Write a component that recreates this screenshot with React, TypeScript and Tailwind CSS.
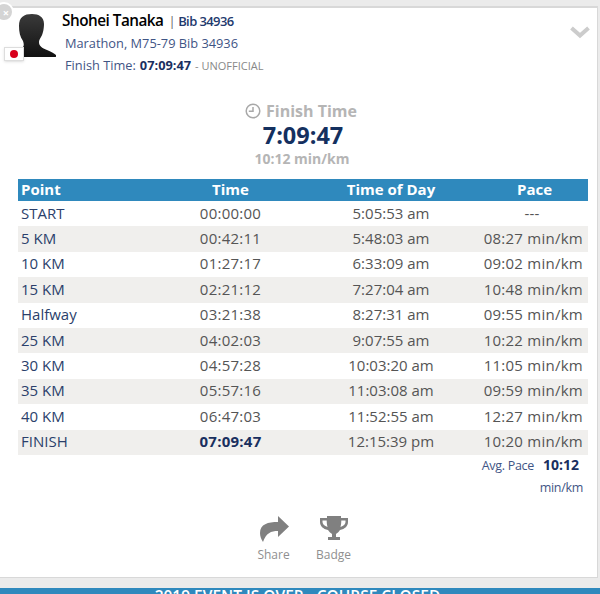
const rows = [
  ["START", "00:00:00", "5:05:53 am", "---"],
  ["5 KM", "00:42:11", "5:48:03 am", "08:27 min/km"],
  ["10 KM", "01:27:17", "6:33:09 am", "09:02 min/km"],
  ["15 KM", "02:21:12", "7:27:04 am", "10:48 min/km"],
  ["Halfway", "03:21:38", "8:27:31 am", "09:55 min/km"],
  ["25 KM", "04:02:03", "9:07:55 am", "10:22 min/km"],
  ["30 KM", "04:57:28", "10:03:20 am", "11:05 min/km"],
  ["35 KM", "05:57:16", "11:03:08 am", "09:59 min/km"],
  ["40 KM", "06:47:03", "11:52:55 am", "12:27 min/km"],
  ["FINISH", "07:09:47", "12:15:39 pm", "10:20 min/km"],
];

export default function App() {
  return (
    <div className="relative h-[594px] w-[600px] overflow-hidden bg-[#ebebeb] pt-[6px] font-['Open_Sans',sans-serif] text-[#555]">
      <div className="absolute left-[-6px] top-[2px] flex h-[20px] w-[20px] items-center justify-center rounded-full border-2 border-white bg-[#d4d4d4] pl-[4px] text-[11px] font-bold leading-none text-white">×</div>
      <div className="mr-[2px] h-[572px] border-t-2 border-r border-b border-[#d8d8d8] bg-white">
        <div className="flex h-[88px]">
          <div className="relative ml-[4px] mt-[2px] h-[50px] w-[52px] shrink-0">
            <svg viewBox="0 0 52 50" className="absolute left-0 top-0 h-[50px] w-[52px]">
              <defs>
                <linearGradient id="p" x1="0" y1="0" x2="0" y2="1">
                  <stop offset="0" stopColor="#3a3a3a" />
                  <stop offset="1" stopColor="#111" />
                </linearGradient>
              </defs>
              <path fill="url(#p)" d="M28 4c-8 0-13 3-13 12 0 6 1 11 4 15 1 3 1 5 0 6-2 3-6 6-9 8l-1 1 2 1h40c1 0 2-1 1-2-2-2-5-3-9-5-5-2-8-4-8-8 0-2 1-3 2-5 2-3 3-9 3-13 0-7-5-10-12-10z" />
            </svg>
            <div className="absolute bottom-[-1px] left-0 flex h-[14px] w-[20px] items-center justify-center border border-[#ddd] bg-white shadow-sm">
              <div className="h-[8px] w-[8px] rounded-full bg-[#d8001c]" />
            </div>
          </div>
          <div className="ml-[6px] pt-[2px]">
            <div className="flex items-baseline text-[15.3px] leading-[20px] tracking-[-0.5px]">
              <span className="font-semibold text-black">Shohei Tanaka</span>
              <span className="ml-[5px] text-[13px] text-[#666]">|</span>
              <span className="ml-[3px] text-[13px] font-semibold tracking-[-0.6px] text-[#1f3a6e]">Bib 34936</span>
            </div>
            <div className="ml-[3px] mt-[2px] text-[12.8px] leading-[20px] text-[#3f5585]">Marathon, M75-79 Bib 34936</div>
            <div className="ml-[3px] mt-[2px] flex items-baseline text-[12.8px] leading-[20px] text-[#3f5585]">
              <span>Finish Time:</span>
              <span className="ml-[4px] font-bold text-[#1a2f5f]">07:09:47</span>
              <span className="ml-[4px] text-[11px] text-[#888]">- UNOFFICIAL</span>
            </div>
          </div>
        </div>
        <div className="flex items-center justify-center gap-[5px] pl-[5px] pt-[4px] text-[16px] font-bold leading-[22px] text-[#b5b5b5]">
          <svg viewBox="0 0 16 16" className="h-[16px] w-[16px]" fill="none" stroke="#a8a8a8" strokeWidth="1.5">
            <circle cx="8" cy="8" r="6.8" />
            <path d="M8 4v4.300H3.800" />
          </svg>
          <span>Finish Time</span>
        </div>
        <div className="pl-[9px] text-center text-[23.5px] font-bold leading-[27px] text-[#14305f]">7:09:47</div>
        <div className="pl-[7px] text-center text-[14px] font-bold leading-[20px] text-[#b5b5b5]">10:12 min/km</div>
        <div className="ml-[18px] mr-[9px] mt-[10px]">
          <div className="grid h-[22px] grid-cols-[133px_160px_160px_117px] items-center bg-[#2f89bd] pb-[1px] text-[15px] font-bold leading-none text-white">
            <div className="pl-[3px]">Point</div>
            <div className="pr-[1px] text-center">Time</div>
            <div className="text-center">Time of Day</div>
            <div className="pl-[10px] text-center">Pace</div>
          </div>
          {rows.map((r, i) => (
            <div key={r[0]} className={`grid h-[25.4px] grid-cols-[133px_160px_160px_117px] items-center pb-[1px] text-[15px] leading-none ${i % 2 === 1 ? "bg-[#f0efed]" : "bg-white"}`}>
              <div className="pl-[3px] text-[#2b3f6b]">{r[0]}</div>
              <div className={`pr-[1px] text-center tracking-[0.25px] ${i === 9 ? "font-bold text-[#1a2f5f]" : "text-[#555]"}`}>{r[1]}</div>
              <div className="text-center text-[#555]">{r[2]}</div>
              <div className={`whitespace-nowrap pr-[5px] tracking-[0.25px] text-[#555] ${i === 0 ? "pl-[10px] text-center" : "text-right"}`}>{r[3]}</div>
            </div>
          ))}
          <div className="flex items-baseline justify-end pr-[9px] leading-[20px] text-[#3f5585]">
            <span className="text-[12.5px] tracking-[-0.3px]">Avg. Pace</span>
            <span className="ml-[9px] text-[14px] font-bold text-[#1a2f5f]">10:12</span>
          </div>
          <div className="pr-[5px] pt-[2px] text-right text-[12.5px] leading-[20px] tracking-[-0.3px] text-[#3f5585]">min/km</div>
        </div>
        <div className="mt-[18px] flex justify-center gap-[24px] pl-[10px] text-[12px] leading-[16px] text-[#8f8f8f]">
          <div className="flex w-[36px] flex-col items-center">
            <svg viewBox="0 0 30 26" className="h-[26px] w-[30px]" fill="#808080">
              <path d="M19 0l11 10.500L19 21v-6c-7 0-12 2-15 11-2-3-3-6-3-9C1 8 9 6 19 6z" />
            </svg>
            <span className="mt-[5px]">Share</span>
          </div>
          <div className="flex w-[36px] flex-col items-center">
            <svg viewBox="0 0 28 26" className="h-[26px] w-[28px]" fill="#808080">
              <path d="M7 0h14v2h7v4c0 4-3 7-8 8-1 2-3 3-4 4v3h4v3H8v-3h4v-3c-1-1-3-2-4-4C3 13 0 10 0 6V2h7zM2.500 4.500V6c0 2 2 4 5 5-.5-2-.8-4-.8-6.500zm23 0h-4.200c0 2.500-.3 4.500-.8 6.500 3-1 5-3 5-5z" fillRule="evenodd" />
            </svg>
            <span className="mt-[5px]">Badge</span>
          </div>
        </div>
      </div>
      <svg viewBox="0 0 20 12" className="absolute left-[570px] top-[26px] h-[13px] w-[20px]" fill="none" stroke="#cccccc" strokeWidth="4">
        <path d="M1.500 1.500L10 9l8.500-7.500" />
      </svg>
      <div className="mt-[10px] h-[6px] overflow-hidden bg-[#2f89bd] pr-[5px] text-center text-[15.5px] font-semibold leading-[17px] text-white">2019 EVENT IS OVER - COURSE CLOSED</div>
    </div>
  );
}
